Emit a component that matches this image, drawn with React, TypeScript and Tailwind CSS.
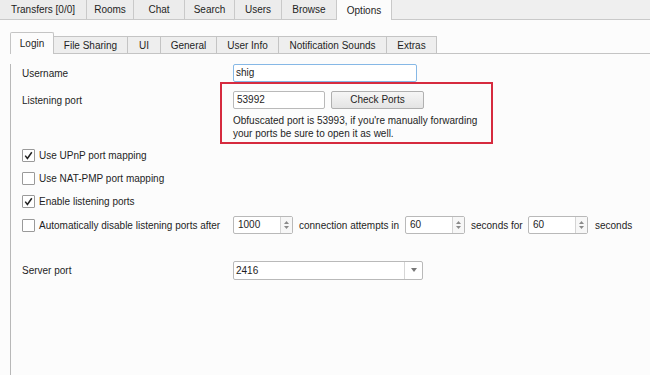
const topTabs = [
  { label: 'Transfers [0/0]', w: 'w-[87px]' },
  { label: 'Rooms', w: 'w-[47px]' },
  { label: 'Chat', w: 'w-[51px]' },
  { label: 'Search', w: 'w-[50px]' },
  { label: 'Users', w: 'w-[47px]' },
  { label: 'Browse', w: 'w-[55px]' },
];

const innerTabs = [
  { label: 'File Sharing', w: 'w-[74px]' },
  { label: 'UI', w: 'w-[33px]' },
  { label: 'General', w: 'w-[56px]' },
  { label: 'User Info', w: 'w-[62px]' },
  { label: 'Notification Sounds', w: 'w-[108px]' },
  { label: 'Extras', w: 'w-[50px]' },
];

function CheckBox({ checked }: { checked: boolean }) {
  return (
    <span className="w-[13px] h-[13px] border border-[#9a9a9a] bg-white rounded-[1px] flex items-center justify-center shrink-0">
      {checked && (
        <svg width="9" height="9" viewBox="0 0 9 9">
          <path d="M1.2 4.6 L3.4 7.4 L7.8 1.2" stroke="#222" strokeWidth="1.5" fill="none" />
        </svg>
      )}
    </span>
  );
}

function SpinBox({ value }: { value: string }) {
  return (
    <div className="w-[60px] h-[18px] border border-[#b9b9b9] rounded-[2px] bg-white flex">
      <span className="flex-1 pl-[4px] leading-[16px]">{value}</span>
      <span className="w-[12px] border-l border-[#d4d4d4] bg-[#f7f7f7] flex flex-col items-center justify-center gap-[2px]">
        <svg width="5" height="3" viewBox="0 0 5 3"><path d="M0 3 L2.5 0 L5 3 Z" fill="#8a8a8a" /></svg>
        <svg width="5" height="3" viewBox="0 0 5 3"><path d="M0 0 L2.5 3 L5 0 Z" fill="#8a8a8a" /></svg>
      </span>
    </div>
  );
}

export default function App() {
  return (
    <div className="relative w-[650px] h-[375px] overflow-hidden bg-[#fcfcfc] text-[#1e1e1e] text-[10px] font-['Liberation_Sans',Arial,sans-serif]">
      {/* Onglets principaux */}
      <div className="flex h-[20px]">
        {topTabs.map((t) => (
          <div
            key={t.label}
            className={`${t.w} h-[20px] bg-[#ececec] border-r border-b border-[#c9c9c9] flex items-center justify-center`}
          >
            {t.label}
          </div>
        ))}
        <div className="w-[55px] h-[20px] bg-[#fcfcfc] border-r border-[#c9c9c9] flex items-center justify-center">
          Options
        </div>
        <div className="flex-1 h-[20px] bg-[#efefef] border-b border-[#c9c9c9]" />
      </div>

      {/* Sous-onglets */}
      <div className="flex items-end h-[22px] mt-[12px] ml-[10px]">
        <div className="w-[44px] h-[22px] bg-[#fcfcfc] border-l border-t border-r border-[#c4c4c4] rounded-t-[2px] flex items-center justify-center pb-[1px]">
          Login
        </div>
        {innerTabs.map((t) => (
          <div
            key={t.label}
            className={`${t.w} h-[18px] bg-[#eeeeee] border-t border-r border-b border-[#c4c4c4] flex items-center justify-center`}
          >
            {t.label}
          </div>
        ))}
        <div className="flex-1 h-[18px] border-b border-[#c4c4c4]" />
      </div>

      {/* Contenu */}
      <div className="ml-[10px] h-[400px] border-l border-[#b8b8b8] pl-[11px]">
        <div className="flex items-center h-[18px] mt-[10px]">
          <span className="w-[211px]">Username</span>
          <div className="w-[184px] h-[18px] border border-[#86b8e6] rounded-[2px] bg-white pl-[2px] leading-[16px]">
            shig
          </div>
        </div>

        <div className="flex items-center h-[18px] mt-[9px]">
          <span className="w-[211px]">Listening port</span>
          <div className="w-[92px] h-[18px] border border-[#b9b9b9] rounded-[2px] bg-white pl-[3px] leading-[16px]">
            53992
          </div>
          <button className="ml-[6px] w-[93px] h-[18px] border border-[#b0b0b0] rounded-[2px] bg-gradient-to-b from-[#f6f6f6] to-[#e4e4e4] leading-[16px] text-center">
            Check Ports
          </button>
        </div>

        <div className="ml-[211px] mt-[5px] leading-[13px]">
          <div>Obfuscated port is 53993, if you're manually forwarding</div>
          <div>your ports be sure to open it as well.</div>
        </div>

        <div className="flex items-center h-[18px] mt-[6px] gap-[4px]">
          <CheckBox checked />
          <span>Use UPnP port mapping</span>
        </div>
        <div className="flex items-center h-[18px] mt-[5px] gap-[4px]">
          <CheckBox checked={false} />
          <span>Use NAT-PMP port mapping</span>
        </div>
        <div className="flex items-center h-[18px] mt-[5px] gap-[4px]">
          <CheckBox checked />
          <span>Enable listening ports</span>
        </div>
        <div className="flex items-center h-[18px] mt-[6px]">
          <div className="w-[211px] flex items-center gap-[4px]">
            <CheckBox checked={false} />
            <span>Automatically disable listening ports after</span>
          </div>
          <SpinBox value="1000" />
          <span className="ml-[6px] w-[106px]">connection attempts in</span>
          <SpinBox value="60" />
          <span className="ml-[6px] w-[57px]">seconds for</span>
          <SpinBox value="60" />
          <span className="ml-[7px]">seconds</span>
        </div>

        <div className="flex items-center h-[18px] mt-[27px]">
          <span className="w-[211px]">Server port</span>
          <div className="w-[190px] h-[19px] border border-[#b9b9b9] rounded-[2px] bg-white flex">
            <span className="flex-1 pl-[2px] leading-[17px]">2416</span>
            <span className="w-[18px] border-l border-[#d6d6d6] flex items-center justify-center">
              <svg width="6" height="4" viewBox="0 0 6 4"><path d="M0 0 L3 4 L6 0 Z" fill="#777" /></svg>
            </span>
          </div>
        </div>
      </div>

      {/* Cadre d'annotation rouge */}
      <div className="absolute left-[220px] top-[82px] w-[273px] h-[62px] border-2 border-[#d62b3f] pointer-events-none" />
    </div>
  );
}
